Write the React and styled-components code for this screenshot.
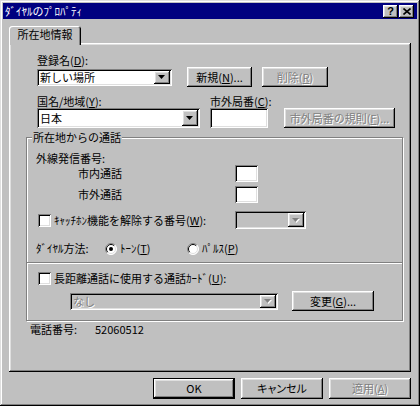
import React from 'react';
import styled, { createGlobalStyle, css } from 'styled-components';

const GlobalStyle = createGlobalStyle`
  html, body {
    margin: 0;
    padding: 0;
    background: #c0c0c0;
  }
  body {
    font-family: "Noto Sans CJK JP", "Liberation Sans", sans-serif;
    font-size: 11px;
    line-height: 13px;
    color: #000;
  }
  * {
    box-sizing: border-box;
  }
`;

const raised = css`
  box-shadow: inset -1px -1px #000, inset 1px 1px #fff, inset -2px -2px #808080,
    inset 2px 2px #dfdfdf;
`;

const sunken = css`
  box-shadow: inset 1px 1px #808080, inset -1px -1px #fff, inset 2px 2px #000,
    inset -2px -2px #dfdfdf;
`;

const disabledText = css`
  color: #808080;
  text-shadow: 1px 1px 0 #fff;
`;

const Window = styled.div`
  width: 420px;
  height: 406px;
  padding: 3px;
  background: #c0c0c0;
  box-shadow: inset -1px -1px #000, inset 1px 1px #dfdfdf, inset -2px -2px #808080,
    inset 2px 2px #fff;
  display: flex;
  flex-direction: column;
`;

const TitleBar = styled.div`
  height: 16px;
  background: #000080;
  color: #fff;
  display: flex;
  align-items: center;
  gap: 1px;
  padding: 0 3px 0 2px;
`;

const TitleText = styled.span`
  flex: 1;
  font-size: 11px;
  line-height: 14px;
  white-space: nowrap;
`;

const TitleButton = styled.div`
  width: 15px;
  height: 13px;
  background: #c0c0c0;
  ${raised};
  display: flex;
  align-items: center;
  justify-content: center;
  color: #000;
  font: bold 11px "Liberation Sans", sans-serif;
  line-height: 11px;
`;

const Body = styled.div`
  padding: 7px 6px 0 6px;
  display: flex;
  flex-direction: column;
`;

const TabStrip = styled.div`
  height: 17px;
  display: flex;
`;

const Tab = styled.div`
  position: relative;
  z-index: 1;
  width: 72px;
  height: 19px;
  background: #c0c0c0;
  border-radius: 3px 3px 0 0;
  box-shadow: inset 1px 1px #fff, inset -1px 0 #000, inset -2px 0 #808080;
  display: flex;
  align-items: center;
  justify-content: center;
  padding-bottom: 2px;
  white-space: nowrap;
`;

const Panel = styled.div`
  width: 402px;
  height: 329px;
  background: #c0c0c0;
  ${raised};
  padding: 11px 0 0 17px;
  display: flex;
  flex-direction: column;
`;

const SectionA = styled.div`
  padding-left: 11px;
  display: flex;
  flex-direction: column;
`;

const FieldLabel = styled.div`
  height: 13px;
  white-space: nowrap;
`;

const ControlRow = styled.div`
  display: flex;
  align-items: center;
  height: 20px;
`;

const Columns = styled.div`
  display: flex;
  align-items: flex-end;
  margin-top: 8px;
`;

const Column = styled.div`
  display: flex;
  flex-direction: column;
  width: ${(p) => p.$w}px;
  margin-left: ${(p) => p.$ml || 0}px;
`;

const ComboBox = styled.div`
  width: ${(p) => p.$w}px;
  height: ${(p) => p.$h}px;
  margin-left: ${(p) => p.$ml || 0}px;
  background: ${(p) => (p.$disabled ? '#c0c0c0' : '#fff')};
  ${sunken};
  padding: 2px;
  display: flex;
  align-items: stretch;
  flex-shrink: 0;
`;

const ComboText = styled.span`
  flex: 1;
  padding-left: 1px;
  display: flex;
  align-items: center;
  white-space: nowrap;
  ${(p) => p.$disabled && disabledText};
`;

const ArrowButton = styled.div`
  width: 16px;
  background: #c0c0c0;
  ${raised};
  display: flex;
  align-items: center;
  justify-content: center;
`;

const TextBox = styled.div`
  width: ${(p) => p.$w}px;
  height: ${(p) => p.$h}px;
  background: #fff;
  ${sunken};
  flex-shrink: 0;
`;

const PushButton = styled.div`
  width: ${(p) => p.$w}px;
  height: ${(p) => p.$h || 20}px;
  margin-left: ${(p) => p.$ml || 0}px;
  background: #c0c0c0;
  ${raised};
  ${(p) =>
    p.$default &&
    css`
      border: 1px solid #000;
    `};
  display: flex;
  align-items: center;
  justify-content: center;
  white-space: nowrap;
  flex-shrink: 0;
  ${(p) => p.$proportional && 'font-feature-settings: "palt";'};
  ${(p) => p.$disabled && disabledText};
`;

const GroupBox = styled.div`
  width: 377px;
  margin-top: ${(p) => p.$mt || 0}px;
  border: 1px solid #808080;
  box-shadow: inset 1px 1px #fff, 1px 1px #fff;
  padding: ${(p) => p.$pad};
  display: flex;
  flex-direction: column;
  align-items: flex-start;
`;

const GroupCaption = styled.div`
  margin: -7px 0 0 -4px;
  padding: 0 1px;
  background: #c0c0c0;
  height: 13px;
  white-space: nowrap;
`;

const Plain = styled.div`
  margin-top: ${(p) => p.$mt || 0}px;
  margin-left: ${(p) => p.$ml || 0}px;
  height: 13px;
  white-space: nowrap;
`;

const FormRow = styled.div`
  display: flex;
  align-items: center;
  margin-top: ${(p) => p.$mt || 0}px;
`;

const RowLabel = styled.div`
  width: ${(p) => p.$w}px;
  padding-left: ${(p) => p.$indent || 0}px;
  display: flex;
  align-items: center;
  white-space: nowrap;
  flex-shrink: 0;
`;

const CheckBox = styled.div`
  width: 13px;
  height: 13px;
  margin-left: 2px;
  margin-right: 3px;
  background: #fff;
  ${sunken};
  flex-shrink: 0;
`;

const RadioItem = styled.div`
  width: ${(p) => p.$w}px;
  display: flex;
  align-items: center;
  gap: 3px;
  white-space: nowrap;
`;

const Phone = styled.div`
  display: flex;
  margin: 2px 0 0 4px;
  height: 13px;
`;

const PhoneLabel = styled.span`
  width: 65px;
`;

const ButtonRow = styled.div`
  display: flex;
  justify-content: flex-end;
  gap: 6px;
  margin-top: 6px;
`;

const DownArrow = ({ disabled }) => (
  <svg width="8" height="5" viewBox="0 0 8 5">
    {disabled && <polygon points="1,1 8,1 4.5,5" fill="#fff" />}
    <polygon points="0,0 7,0 3.5,4" fill={disabled ? '#808080' : '#000'} />
  </svg>
);

const Combo = ({ w, h, ml, disabled, children }) => (
  <ComboBox $w={w} $h={h} $ml={ml} $disabled={disabled}>
    <ComboText $disabled={disabled}>{children}</ComboText>
    <ArrowButton>
      <DownArrow disabled={disabled} />
    </ArrowButton>
  </ComboBox>
);

const Radio = ({ checked }) => (
  <svg width="12" height="12" viewBox="0 0 12 12">
    <circle cx="6" cy="6" r="5.5" fill="#fff" />
    <path d="M2.1 9.9 A5.5 5.5 0 0 1 9.9 2.1" fill="none" stroke="#808080" />
    <path d="M9.9 2.1 A5.5 5.5 0 0 1 2.1 9.9" fill="none" stroke="#fff" />
    <path d="M2.8 9.2 A4.5 4.5 0 0 1 9.2 2.8" fill="none" stroke="#000" />
    <path d="M9.2 2.8 A4.5 4.5 0 0 1 2.8 9.2" fill="none" stroke="#dfdfdf" />
    {checked && <circle cx="6" cy="6" r="2" fill="#000" />}
  </svg>
);

const CloseGlyph = () => (
  <svg width="8" height="7" viewBox="0 0 8 7">
    <path d="M0.5 0.5 L7.5 6.5 M7.5 0.5 L0.5 6.5" stroke="#000" strokeWidth="1.6" />
  </svg>
);

export default function App() {
  return (
    <>
      <GlobalStyle />
      <Window>
        <TitleBar>
          <TitleText>ﾀﾞｲﾔﾙのﾌﾟﾛﾊﾟﾃｨ</TitleText>
          <TitleButton>?</TitleButton>
          <TitleButton>
            <CloseGlyph />
          </TitleButton>
        </TitleBar>

        <Body>
          <TabStrip>
            <Tab>所在地情報</Tab>
          </TabStrip>

          <Panel>
            <SectionA>
              <FieldLabel>
                登録名(<u>D</u>):
              </FieldLabel>
              <ControlRow>
                <Combo w={135} h={17}>
                  新しい場所
                </Combo>
                <PushButton $w={65} $ml={15}>
                  新規(<u>N</u>)...
                </PushButton>
                <PushButton $w={66} $ml={10} $disabled>
                  削除(<u>R</u>)
                </PushButton>
              </ControlRow>

              <Columns>
                <Column $w={163}>
                  <FieldLabel>
                    国名/地域(<u>Y</u>):
                  </FieldLabel>
                  <Combo w={163} h={20}>
                    日本
                  </Combo>
                </Column>
                <Column $w={58} $ml={10}>
                  <FieldLabel>
                    市外局番(<u>C</u>):
                  </FieldLabel>
                  <TextBox $w={58} $h={20} />
                </Column>
                <Column $w={111} $ml={16}>
                  <PushButton $w={111} $disabled>
                    市外局番の規則(<u>F</u>)...
                  </PushButton>
                </Column>
              </Columns>
            </SectionA>

            <GroupBox $mt={9} $pad="0 8px 7px 9px">
              <GroupCaption>所在地からの通話</GroupCaption>
              <Plain $mt={8}>外線発信番号:</Plain>
              <FormRow>
                <RowLabel $w={199} $indent={42}>
                  市内通話
                </RowLabel>
                <TextBox $w={23} $h={17} />
              </FormRow>
              <FormRow $mt={4}>
                <RowLabel $w={199} $indent={42}>
                  市外通話
                </RowLabel>
                <TextBox $w={23} $h={17} />
              </FormRow>
              <FormRow $mt={8}>
                <RowLabel $w={199}>
                  <CheckBox />
                  ｷｬｯﾁﾎﾝ機能を解除する番号(<u>W</u>):
                </RowLabel>
                <Combo w={71} h={18} disabled />
              </FormRow>
              <FormRow $mt={13}>
                <RowLabel $w={69}>ﾀﾞｲﾔﾙ方法:</RowLabel>
                <RadioItem $w={82}>
                  <Radio checked />
                  <span>
                    ﾄｰﾝ(<u>T</u>)
                  </span>
                </RadioItem>
                <RadioItem $w={80}>
                  <Radio />
                  <span>
                    ﾊﾟﾙｽ(<u>P</u>)
                  </span>
                </RadioItem>
              </FormRow>
            </GroupBox>

            <GroupBox $mt={-1} $pad="9px 8px 9px 9px">
              <FormRow>
                <CheckBox />
                <span>
                  長距離通話に使用する通話ｶｰﾄﾞ(<u>U</u>):
                </span>
              </FormRow>
              <FormRow $mt={6}>
                <Combo w={208} h={17} ml={34} disabled>
                  なし
                </Combo>
                <PushButton $w={82} $ml={14}>
                  変更(<u>G</u>)...
                </PushButton>
              </FormRow>
            </GroupBox>

            <Phone>
              <PhoneLabel>電話番号:</PhoneLabel>
              <span>52060512</span>
            </Phone>
          </Panel>

          <ButtonRow>
            <PushButton $w={82} $h={21} $default>
              OK
            </PushButton>
            <PushButton $w={82} $h={21} $proportional>
              キャンセル
            </PushButton>
            <PushButton $w={82} $h={21} $disabled>
              適用(<u>A</u>)
            </PushButton>
          </ButtonRow>
        </Body>
      </Window>
    </>
  );
}
